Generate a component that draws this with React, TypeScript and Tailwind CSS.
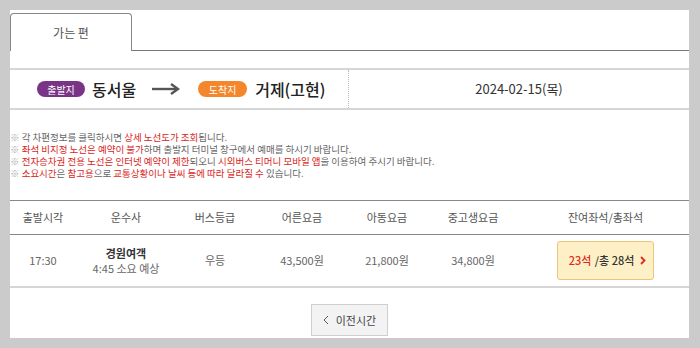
import React from "react";

const font = { fontFamily: '"Noto Sans CJK KR", "Noto Sans", sans-serif' };

function R({ children }: { children: React.ReactNode }) {
  return <span className="text-[#d9261c]">{children}</span>;
}

function Mark() {
  return <span className="text-[#aaa]">※ </span>;
}

export default function App() {
  const cols = "grid grid-cols-[66px_100px_78px_96px_74px_98px_1fr] items-center text-center";
  return (
    <div className="w-[700px] h-[348px] bg-[#cbcbcb] pt-[10px] pl-[10px] pr-[11px]" style={font}>
      <div className="bg-white h-[328px] flex flex-col">
        {/* tabs */}
        <div className="flex pt-[3px]">
          <div className="w-[122px] h-[38px] border border-b-0 border-[#888] rounded-t-[4px] flex items-center justify-center text-[12px] text-[#555]">
            가는 편
          </div>
          <div className="flex-1 border-b border-[#777]"></div>
        </div>

        {/* route bar */}
        <div className="mt-[17px] h-[42px] border-y-2 border-[#d6d6d6] flex">
          <div className="w-[339px] border-r border-dotted border-[#bbb] flex items-center pl-[27px]">
            <span className="w-[48px] h-[16px] rounded-full bg-[#7a3486] text-white text-[10px] flex items-center justify-center">출발지</span>
            <span className="ml-[7px] text-[16px] font-medium text-[#222]">동서울</span>
            <svg className="ml-[16px]" width="28" height="12" viewBox="0 0 28 12">
              <path d="M0 6 H25" stroke="#555" strokeWidth="2.4" />
              <path d="M19 1 L26 6 L19 11" stroke="#555" strokeWidth="2.4" fill="none" />
            </svg>
            <span className="ml-[18px] w-[49px] h-[16px] rounded-full bg-[#f4862b] text-white text-[10px] flex items-center justify-center">도착지</span>
            <span className="ml-[8px] text-[16px] font-medium text-[#222]">거제(고현)</span>
          </div>
          <div className="flex-1 flex items-center justify-center text-[13px] text-[#333]">2024-02-15(목)</div>
        </div>

        {/* notices */}
        <div className="mt-[21px] text-[9.5px] leading-[12px] text-[#666]">
          <div><Mark />각 차편정보를 클릭하시면 <R>상세 노선도가 조회</R>됩니다.</div>
          <div><Mark /><R>좌석 비지정 노선은 예약이 불가</R>하며 출발지 터미널 창구에서 예매를 하시기 바랍니다.</div>
          <div><Mark /><R>전자승차권 전용 노선은 인터넷 예약이 제한</R>되오니 <R>시외버스 티머니 모바일 앱</R>을 이용하여 주시기 바랍니다.</div>
          <div><Mark /><R>소요시간</R>은 <R>참고용</R>으로 <R>교통상황이나 날씨 등에 따라 달라질 수</R> 있습니다.</div>
        </div>

        {/* table */}
        <div className="mt-[21px] border-t border-[#888]">
          <div className={`${cols} h-[34px] border-b border-[#888] text-[11px] text-[#555]`}>
            <div>출발시각</div>
            <div>운수사</div>
            <div>버스등급</div>
            <div>어른요금</div>
            <div>아동요금</div>
            <div>중고생요금</div>
            <div>잔여좌석/총좌석</div>
          </div>
          <div className={`${cols} h-[53px] border-b-2 border-[#d6d6d6] text-[11px] text-[#666]`}>
            <div>17:30</div>
            <div className="flex flex-col leading-[15px]">
              <span className="font-bold text-[#333]">경원여객</span>
              <span>4:45 소요 예상</span>
            </div>
            <div>우등</div>
            <div>43,500원</div>
            <div>21,800원</div>
            <div>34,800원</div>
            <div className="flex justify-center">
              <div className="w-[97px] h-[39px] rounded-[3px] bg-[#fdf0c6] border border-[#e9c57e] flex items-center justify-center gap-[1px] pl-[4px] text-[11px]">
                <span className="text-[#e02a20] font-medium">23석</span>
                <span className="text-[#333] font-medium">&nbsp;/총 28석</span>
                <svg className="ml-[5px]" width="6" height="9" viewBox="0 0 6 9">
                  <path d="M1 1 L4.5 4.5 L1 8" stroke="#e02a20" strokeWidth="1.8" fill="none" />
                </svg>
              </div>
            </div>
          </div>
        </div>

        {/* button */}
        <div className="flex justify-center mt-[16px]">
          <button className="w-[77px] h-[32px] bg-[#f3f3f3] border border-[#cfcfcf] flex items-center justify-center text-[11px] text-[#444]">
            <svg className="mr-[7px]" width="6" height="10" viewBox="0 0 6 10">
              <path d="M5 1 L1 5 L5 9" stroke="#555" strokeWidth="1" fill="none" />
            </svg>
            이전시간
          </button>
        </div>
      </div>
    </div>
  );
}
